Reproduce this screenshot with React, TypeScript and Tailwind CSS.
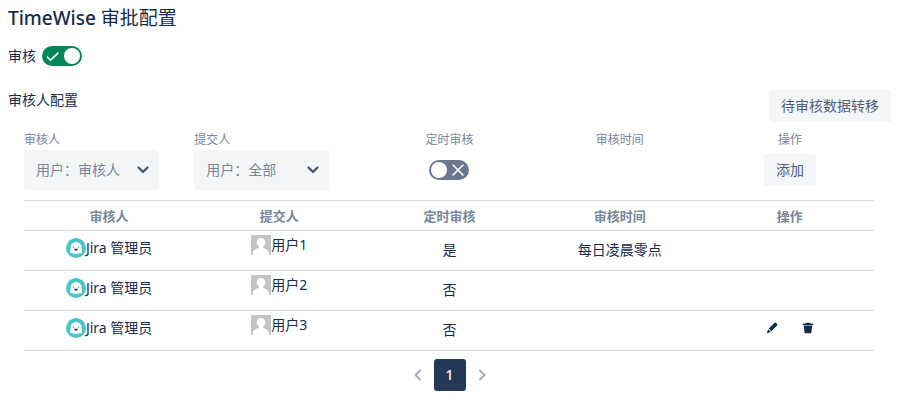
import React, { useState } from 'react';

interface Rule {
  id: number;
  reviewer: string;
  submitter: string;
  scheduled: boolean;
  time: string;
  editable: boolean;
}

const rules: Rule[] = [
  { id: 1, reviewer: 'Jira 管理员', submitter: '用户1', scheduled: true, time: '每日凌晨零点', editable: false },
  { id: 2, reviewer: 'Jira 管理员', submitter: '用户2', scheduled: false, time: '', editable: false },
  { id: 3, reviewer: 'Jira 管理员', submitter: '用户3', scheduled: false, time: '', editable: true },
];

const columns = ['审核人', '提交人', '定时审核', '审核时间', '操作'];

const Toggle: React.FC<{ id: string; defaultOn: boolean }> = ({ id, defaultOn }) => {
  const [on, setOn] = useState(defaultOn);

  return (
    <span className="relative inline-flex h-5 w-10">
      <input
        id={id}
        type="checkbox"
        checked={on}
        onChange={(e) => setOn(e.target.checked)}
        className="h-5 w-10 cursor-pointer appearance-none rounded-full bg-[#6b778c] checked:bg-[#00875a]"
      />
      <span className={`pointer-events-none absolute top-0.5 h-4 w-4 rounded-full bg-white ${on ? 'right-0.5' : 'left-0.5'}`} />
      <svg
        viewBox="0 0 14 14"
        fill="none"
        stroke="#fff"
        strokeWidth="1.6"
        strokeLinecap="round"
        strokeLinejoin="round"
        className={`pointer-events-none absolute top-[3px] h-3.5 w-3.5 ${on ? 'left-1' : 'right-1'}`}
      >
        {on ? <path d="M1.500 8.200l3 3L12 4.200" /> : <path d="M2 2l10 10M12 2L2 12" />}
      </svg>
    </span>
  );
};

const UserSelect: React.FC<{ id: string; value: string }> = ({ id, value }) => (
  <div className="relative w-[135px]">
    <select
      id={id}
      defaultValue={value}
      className="h-10 w-full appearance-none rounded-[3px] bg-[#f4f5f7] pl-3 pr-8 text-sm text-[#7a869a]"
    >
      <option value={value}>{value}</option>
    </select>
    <svg viewBox="0 0 12 8" fill="none" stroke="#42526e" strokeWidth="2.2" strokeLinecap="round" strokeLinejoin="round" className="pointer-events-none absolute right-2.5 top-4 h-2 w-3">
      <path d="M1.5 1.5L6 6l4.5-4.5" />
    </svg>
  </div>
);

const JiraAvatar = () => (
  <svg viewBox="0 0 20 20" className="h-5 w-5 shrink-0">
    <circle cx="10" cy="10" r="10" fill="#4bc5c4" />
    <path d="M3.800 14.600c.6-.8.7-1.600.7-2.600V9.400a5.500 5.400 0 0 1 11 0V12c0 1 .1 1.800.7 2.600-.8.9-1.700.9-2.500.3-.6 1-1.700 1.200-2.400.3-.7.900-1.900.9-2.600 0-.7.900-1.800.7-2.400-.3-.8.6-1.700.6-2.500-.3z" fill="#fff" />
    <path d="M6.800 9.500q.7-.9 1.500 0M11.700 9.500q.8-.9 1.500 0" stroke="#42526e" strokeWidth="0.9" fill="none" />
    <path d="M8 10.800h4a2 2 0 0 1-4 0z" fill="#344563" />
    <path d="M9 12.200h2l-1 .6z" fill="#f15c5c" />
  </svg>
);

const DefaultAvatar = () => (
  <svg viewBox="0 0 20 20" className="h-5 w-5 shrink-0">
    <path d="M0 0h20v20H0z" fill="#c4c4c4" />
    <path d="M10 3c2.7 0 4.2 1.8 4.2 4.3 0 1.700-.8 3.400-1.900 4.400v1c.9 1 5 1.400 5.500 4.300l.2 3H2l.2-3c.5-2.900 4.600-3.300 5.500-4.300v-1c-1.100-1-1.900-2.700-1.900-4.400C5.800 4.800 7.300 3 10 3z" fill="#fff" />
  </svg>
);

const App: React.FC = () => {
  return (
    <main className="bg-white pb-2 pl-2 pr-[9px] pt-1 font-['Noto_Sans','Noto_Sans_CJK_SC',sans-serif] text-sm text-[#172b4d]">
      <h1 className="text-[19px] leading-7">
        <span className="font-medium">TimeWise</span> 审批配置
      </h1>

      <div className="mt-3.5 flex items-center gap-1.5">
        <label htmlFor="approval">审核</label>
        <Toggle id="approval" defaultOn={true} />
      </div>

      <div className="mt-6 flex items-start justify-between">
        <h2 className="leading-5">审核人配置</h2>
        <button type="button" className="h-8 rounded-[3px] bg-[#f4f5f7] px-3 text-sm text-[#505f79]">
          待审核数据转移
        </button>
      </div>

      <div className="mx-4">
        <form className="mt-2 grid grid-cols-5 text-xs text-[#7a869a]">
          <div>
            <label htmlFor="reviewer" className="block leading-5">审核人</label>
            <UserSelect id="reviewer" value="用户：审核人" />
          </div>
          <div>
            <label htmlFor="submitter" className="block leading-5">提交人</label>
            <UserSelect id="submitter" value="用户：全部" />
          </div>
          <div className="flex flex-col items-center">
            <label htmlFor="scheduled" className="leading-5">定时审核</label>
            <div className="flex h-10 items-center">
              <Toggle id="scheduled" defaultOn={false} />
            </div>
          </div>
          <div className="text-center leading-5">审核时间</div>
          <div className="flex flex-col items-center">
            <span className="leading-5">操作</span>
            <div className="flex h-10 items-center">
              <button type="button" className="h-8 rounded-[3px] bg-[#f4f5f7] px-3 text-sm text-[#505f79]">
                添加
              </button>
            </div>
          </div>
        </form>

        <table className="mt-2.5 w-full table-fixed border-collapse text-center">
          <thead>
            <tr className="h-[30px] border-y border-[#d9d9d9]">
              {columns.map((name) => (
                <th key={name} className="p-0 text-[13px] leading-5 font-semibold text-[#7a869a]">{name}</th>
              ))}
            </tr>
          </thead>
          <tbody>
            {rules.map((rule) => (
              <tr key={rule.id} className="h-10 border-b border-[#d9d9d9]">
                <td className="p-0">
                  <div className="flex items-center justify-center pb-1.5">
                    <JiraAvatar />
                    <span className="leading-5">{rule.reviewer}</span>
                  </div>
                </td>
                <td className="p-0">
                  <div className="flex items-center justify-center pb-3">
                    <DefaultAvatar />
                    <span className="leading-5">{rule.submitter}</span>
                  </div>
                </td>
                <td className="p-0 pb-0.5">{rule.scheduled ? '是' : '否'}</td>
                <td className="p-0 pb-0.5">{rule.time}</td>
                <td className="p-0">
                  {rule.editable && (
                    <div className="flex items-center justify-center gap-6 pb-1.5">
                      <button type="button" aria-label="编辑">
                        <svg viewBox="0 0 12 12" fill="#172b4d" className="h-3 w-3">
                          <path d="M8.300 1.100a1.400 1.400 0 0 1 2 0l.6.6a1.400 1.400 0 0 1 0 2L5.400 9.200 2.800 6.600z" />
                          <path d="M2.200 7.300l2.500 2.500-2.900 1.400c-.6.2-1-.2-.8-.8z" />
                        </svg>
                      </button>
                      <button type="button" aria-label="删除">
                        <svg viewBox="0 0 12 12" fill="#172b4d" className="h-3 w-3">
                          <path d="M4.200.8h3.600l.5.7h2.200c.4 0 .6.2.6.6v.8H.9v-.8c0-.4.2-.6.6-.6h2.200z" />
                          <path d="M1.700 3.600h8.600l-.9 6.900c-.1.500-.4.800-.9.800h-5c-.5 0-.8-.3-.9-.8z" />
                        </svg>
                      </button>
                    </div>
                  )}
                </td>
              </tr>
            ))}
          </tbody>
        </table>

        <nav className="mt-2 flex items-center justify-center gap-2.5">
          <button type="button" aria-label="上一页">
            <svg viewBox="0 0 12 12" fill="none" stroke="#a5adba" strokeWidth="2" strokeLinecap="round" strokeLinejoin="round" className="h-3 w-3">
              <path d="M8 1.500L3.500 6 8 10.500" />
            </svg>
          </button>
          <button type="button" className="h-8 w-8 rounded-[3px] bg-[#253858] text-sm font-medium text-white">1</button>
          <button type="button" aria-label="下一页">
            <svg viewBox="0 0 12 12" fill="none" stroke="#a5adba" strokeWidth="2" strokeLinecap="round" strokeLinejoin="round" className="h-3 w-3">
              <path d="M4 1.500L8.500 6 4 10.500" />
            </svg>
          </button>
        </nav>
      </div>
    </main>
  );
};

export default App;
